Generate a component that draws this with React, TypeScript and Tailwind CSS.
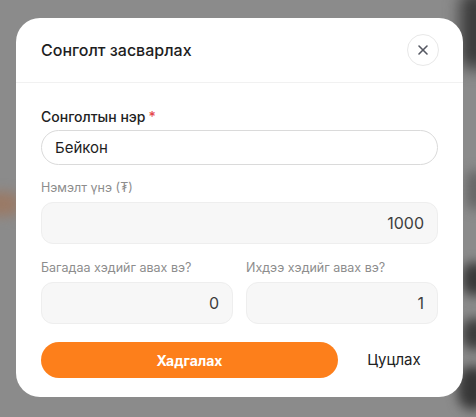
import { X } from "lucide-react";

function Field({
    label,
    value,
    className = "",
}: {
    label: string;
    value: string;
    className?: string;
}) {
    return (
        <div className={className}>
            <div className="text-[12.5px] leading-[18px] text-[#8d8d8d]">{label}</div>
            <input
                readOnly
                value={value}
                className="mt-[5px] w-full h-[42px] rounded-[12px] bg-[#f7f7f7] border border-[#eeeeee] text-right pr-[13px] text-[16px] text-[#3e3e3e] outline-none"
            />
        </div>
    );
}

export default function App() {
    return (
        <div
            className="relative min-h-[417px] overflow-hidden bg-[#8b8b8b] pt-[18px] pl-[16px]"
            style={{ fontFamily: "Inter, 'Noto Sans', sans-serif" }}
        >
            {/* blurred page behind the backdrop */}
            <div className="absolute left-[-20px] top-[192px] w-[40px] h-[24px] rounded-full bg-[#9a7a66] blur-[6px]" />
            <div className="absolute right-[-14px] top-[-10px] w-[30px] h-[80px] rounded-full bg-[#3a3a3a] blur-[8px]" />
            <div className="absolute right-[-10px] top-[170px] w-[20px] h-[40px] rounded-full bg-[#666] blur-[6px]" />
            <div className="absolute right-[-12px] top-[262px] w-[26px] h-[34px] rounded-full bg-[#383838] blur-[6px]" />
            <div className="absolute right-[-12px] top-[318px] w-[26px] h-[32px] rounded-full bg-[#3c3c3c] blur-[6px]" />
            <div className="absolute right-[-12px] top-[366px] w-[30px] h-[44px] rounded-full bg-[#363636] blur-[6px]" />

            <div className="relative w-[447px] rounded-[24px] bg-white">
                <div className="flex items-center justify-between h-[65px] pl-[25px] pr-[24px] border-b border-[#f1f1f1]">
                    <h2 className="text-[16px] font-medium text-[#1e1e1e]">Сонголт засварлах</h2>
                    <button className="w-8 h-8 rounded-full border border-[#e8e8e8] flex items-center justify-center text-[#555862]">
                        <X className="w-4 h-4" strokeWidth={2.4} />
                    </button>
                </div>

                <div className="px-[25px] pt-[24px] pb-[19px]">
                    <div className="text-[14px] leading-[20px] font-medium text-[#222]">
                        Сонголтын нэр<span className="ml-[3px] text-[#e5484d]">*</span>
                    </div>
                    <input
                        readOnly
                        value="Бейкон"
                        className="mt-[3px] w-full h-[35px] rounded-full border border-[#dadada] px-[13px] text-[15px] text-[#1e1e1e] outline-none"
                    />

                    <Field className="mt-[14px]" label="Нэмэлт үнэ (₮)" value="1000" />

                    <div className="mt-[15px] grid grid-cols-2 gap-[13px]">
                        <Field label="Багадаа хэдийг авах вэ?" value="0" />
                        <Field label="Ихдээ хэдийг авах вэ?" value="1" />
                    </div>

                    <div className="mt-[18px] flex items-center gap-[12px]">
                        <button className="w-[297px] h-[36px] rounded-full bg-[#fd7f1b] text-white text-[14px] font-bold">
                            Хадгалах
                        </button>
                        <button className="flex-1 text-center text-[15px] text-[#222]">Цуцлах</button>
                    </div>
                </div>
            </div>
        </div>
    );
}
